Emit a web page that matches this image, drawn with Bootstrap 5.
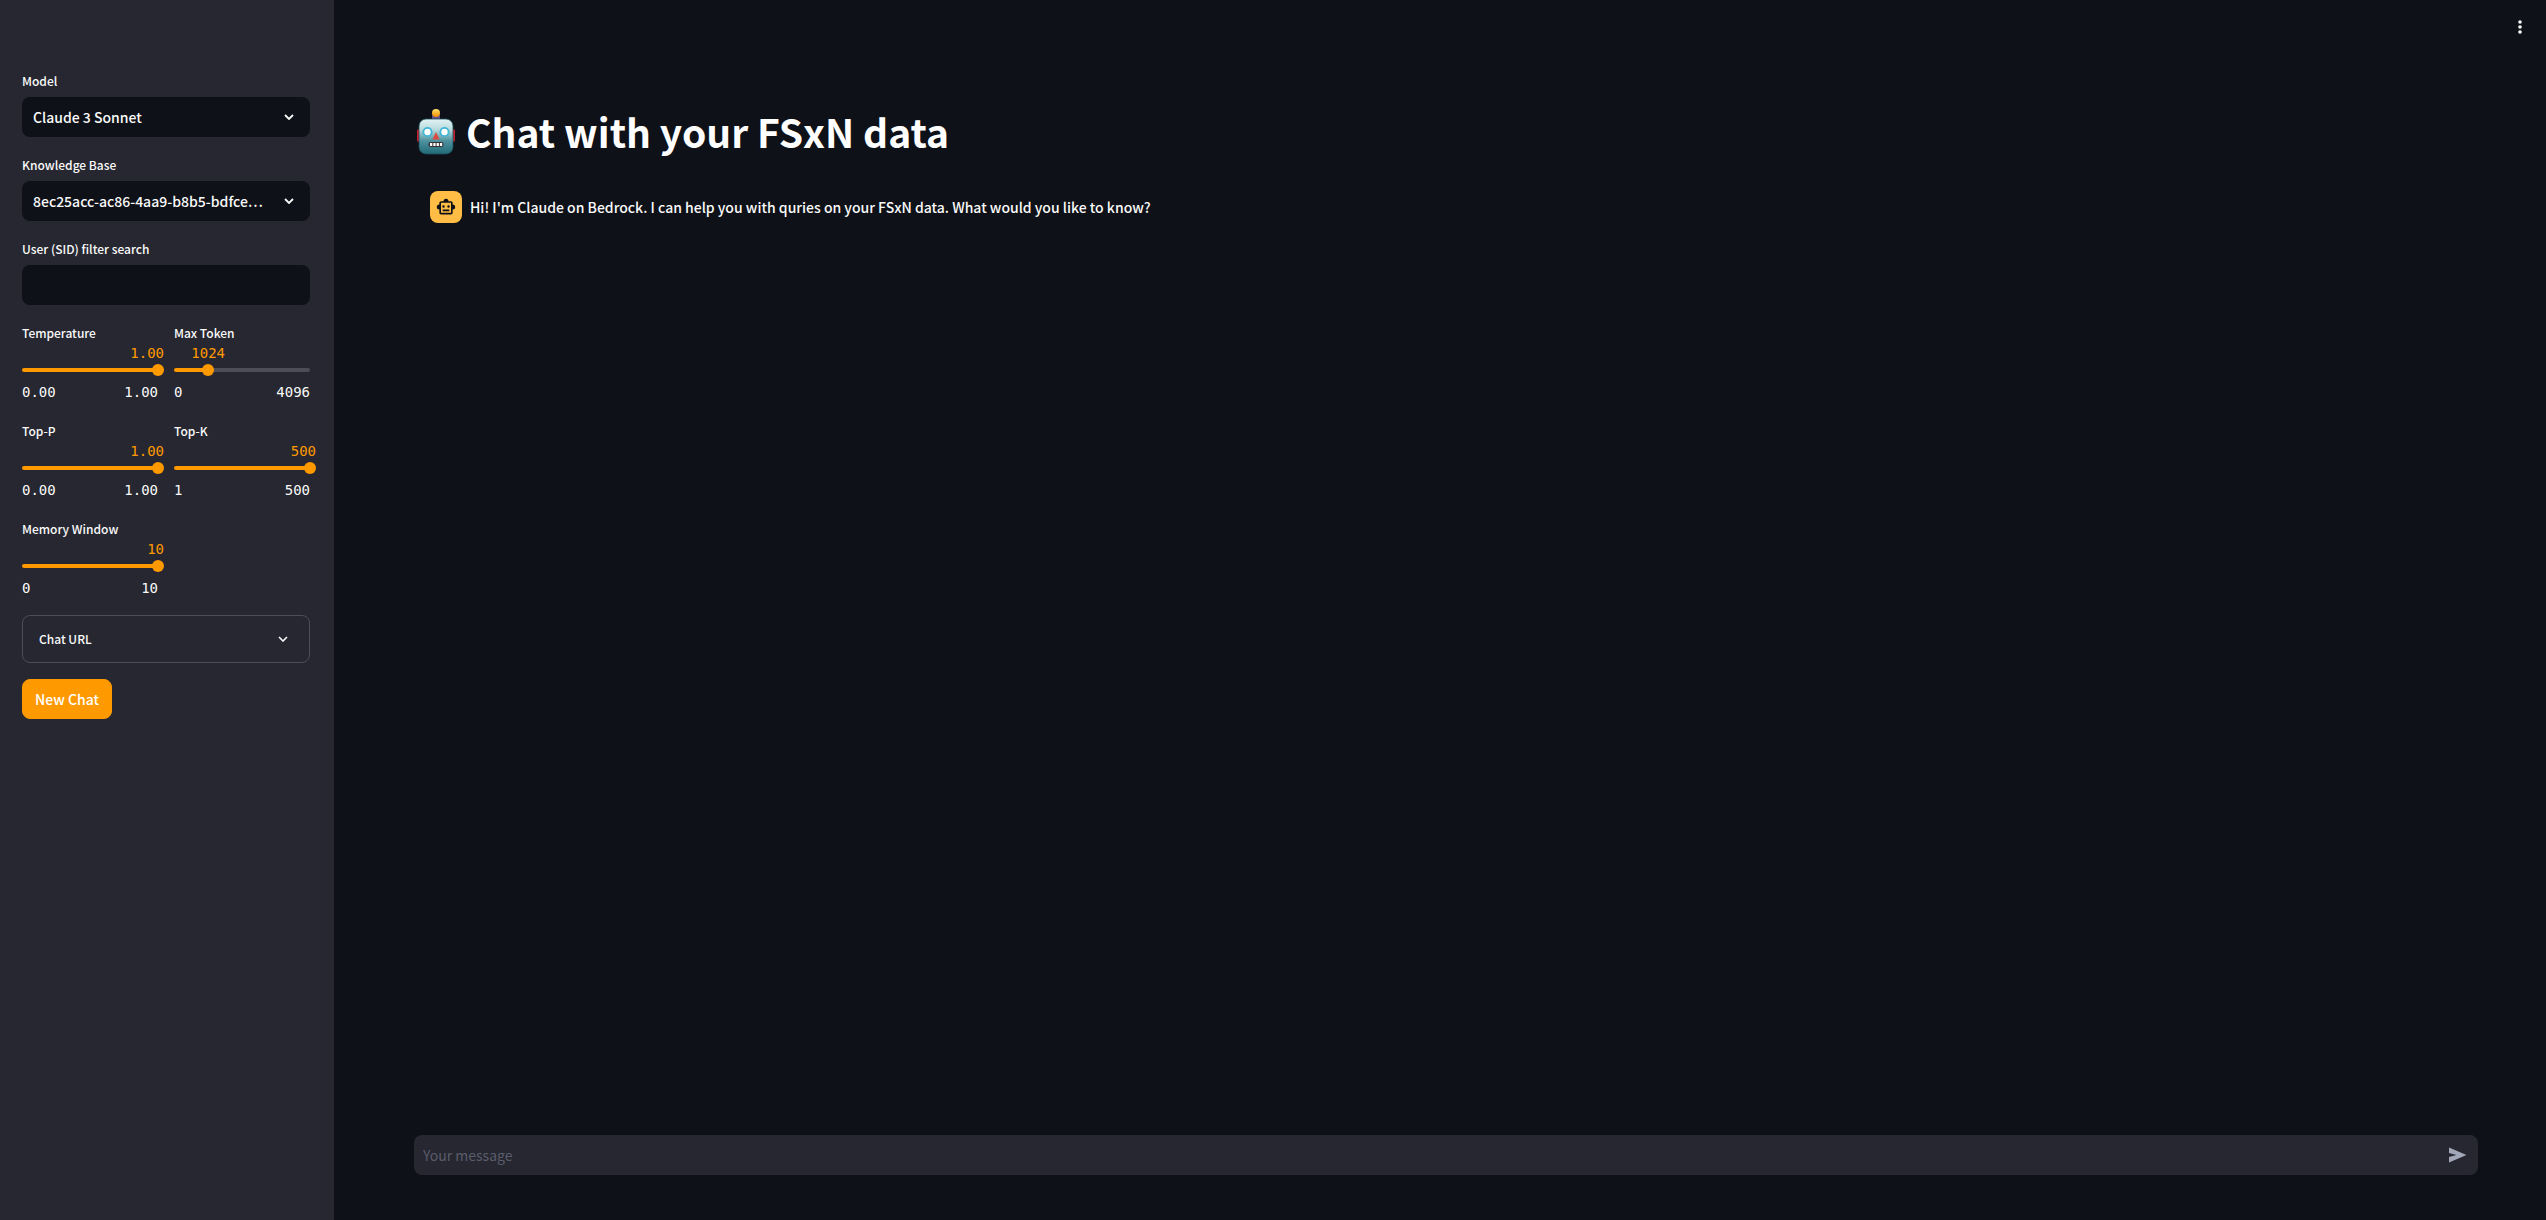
<!DOCTYPE html>
<html lang="en" data-bs-theme="dark">
<head>
<meta charset="utf-8">
<meta name="viewport" content="width=device-width, initial-scale=1">
<title>Chat with your FSxN data</title>
<link href="https://cdn.jsdelivr.net/npm/bootstrap@5.3.0/dist/css/bootstrap.min.css" rel="stylesheet">
<style>
:root { --ink: #fafafa; --page: #0e1117; --panel: #262730; --accent: #ff9900; }
body { background: var(--page); color: var(--ink); font-family: "Noto Sans CJK SC", "Open Sans", sans-serif; font-size: 14px; font-weight: 500; line-height: 24px; }
.side-panel { width: 334px; padding: 69px 24px 24px 22px; background: var(--panel); }
.field-label { display: block; font-size: 12px; line-height: 24px; margin: 0; }
.side-panel .form-select, .side-panel .form-control { height: 40px; margin-top: 4px; padding: 0 44px 0 11px; border: 0; border-radius: 8px; background-color: var(--page); color: var(--ink); font-size: 14px; font-weight: 500; line-height: 24px; }
.side-panel .form-select { background-image: url("data:image/svg+xml,%3Csvg xmlns='http://www.w3.org/2000/svg' viewBox='0 0 10 6'%3E%3Cpath d='M1 1l4 4 4-4' fill='none' stroke='%23fafafa' stroke-width='1.8'/%3E%3C/svg%3E"); background-size: 10px 6px; background-position: right 16px center; }
.slider-grid { display: grid; grid-template-columns: 1fr 1fr; gap: 16px; }
.slider-item { height: 82px; }
.mono { font-family: "DejaVu Sans Mono", monospace; font-size: 14px; font-weight: 400; line-height: 16px; }
.slider-value { display: block; text-align: right; color: var(--accent); }
.rail { display: flex; align-items: center; height: 4px; margin: 7px 0 12px; border-radius: 2px; background: linear-gradient(to right, var(--accent) var(--fill), #4c4d57 var(--fill)); }
.rail input { flex: none; width: calc(100% + 12px); height: 12px; margin: 0 -6px; appearance: none; background: transparent; }
.rail input::-webkit-slider-thumb { appearance: none; width: 12px; height: 12px; border: 0; border-radius: 50%; background: var(--accent); }
.url-box { border: 1px solid #4c4d57; border-radius: 8px; }
.url-box summary { display: flex; align-items: center; justify-content: space-between; height: 46px; padding: 0 21px 0 16px; list-style: none; font-size: 12px; }
.btn-accent { --bs-btn-bg: var(--accent); --bs-btn-color: #fff; --bs-btn-border-color: var(--accent); --bs-btn-hover-bg: #e68a00; --bs-btn-hover-color: #fff; width: 90px; height: 40px; padding: 0; border-radius: 8px; font-size: 14px; font-weight: 500; }
.main-pane { padding: 0 68px 45px 80px; }
.menu-btn { top: 15px; right: 18px; width: 16px; height: 24px; line-height: 0; }
.page-title { margin: 103px 0 0; font-size: 39px; font-weight: 700; line-height: 56px; gap: 8px; }
.chat-row { margin-top: 32px; padding-left: 16px; gap: 8px; }
.avatar { width: 32px; height: 32px; border-radius: 8px; background: #ffbd45; }
.composer { height: 40px; border-radius: 8px; background: var(--panel); padding: 0 11px 0 9px; }
.composer input { padding: 0; font-size: 14px; line-height: 24px; color: var(--ink); box-shadow: none; }
.composer input::placeholder { color: #5b5c6c; font-weight: 400; opacity: 1; }
</style>
<script src="https://cdn.jsdelivr.net/npm/bootstrap@5.3.0/dist/js/bootstrap.bundle.min.js"></script>
</head>
<body>
<div class="d-flex min-vh-100">
  <aside class="side-panel flex-shrink-0 d-flex flex-column gap-3">
    <div>
      <label class="field-label" for="model">Model</label>
      <select class="form-select" id="model"><option>Claude 3 Sonnet</option></select>
    </div>
    <div>
      <label class="field-label" for="kb">Knowledge Base</label>
      <select class="form-select" id="kb"><option>8ec25acc-ac86-4aa9-b8b5-bdfce…</option></select>
    </div>
    <div>
      <label class="field-label" for="sid">User (SID) filter search</label>
      <input class="form-control" id="sid" type="text">
    </div>
    <div class="slider-grid">
      <div class="slider-item">
        <label class="field-label" for="temp">Temperature</label>
        <output class="mono slider-value" for="temp" style="width: calc(100% + 6px)">1.00</output>
        <div class="rail" style="--fill: 100%"><input type="range" id="temp" min="0" max="1" step="0.01" value="1"></div>
        <div class="mono d-flex justify-content-between"><span>0.00</span><span>1.00</span></div>
      </div>
      <div class="slider-item">
        <label class="field-label" for="tokens">Max Token</label>
        <output class="mono slider-value" for="tokens" style="width: calc(25% + 17px)">1024</output>
        <div class="rail" style="--fill: 25%"><input type="range" id="tokens" min="0" max="4096" value="1024"></div>
        <div class="mono d-flex justify-content-between"><span>0</span><span>4096</span></div>
      </div>
      <div class="slider-item">
        <label class="field-label" for="topp">Top-P</label>
        <output class="mono slider-value" for="topp" style="width: calc(100% + 6px)">1.00</output>
        <div class="rail" style="--fill: 100%"><input type="range" id="topp" min="0" max="1" step="0.01" value="1"></div>
        <div class="mono d-flex justify-content-between"><span>0.00</span><span>1.00</span></div>
      </div>
      <div class="slider-item">
        <label class="field-label" for="topk">Top-K</label>
        <output class="mono slider-value" for="topk" style="width: calc(100% + 6px)">500</output>
        <div class="rail" style="--fill: 100%"><input type="range" id="topk" min="1" max="500" value="500"></div>
        <div class="mono d-flex justify-content-between"><span>1</span><span>500</span></div>
      </div>
      <div class="slider-item">
        <label class="field-label" for="memory">Memory Window</label>
        <output class="mono slider-value" for="memory" style="width: calc(100% + 6px)">10</output>
        <div class="rail" style="--fill: 100%"><input type="range" id="memory" min="0" max="10" value="10"></div>
        <div class="mono d-flex justify-content-between"><span>0</span><span>10</span></div>
      </div>
    </div>
    <details class="url-box">
      <summary>Chat URL
        <svg width="10" height="6" viewBox="0 0 10 6" aria-hidden="true"><path d="M1 1l4 4 4-4" fill="none" stroke="#fafafa" stroke-width="1.6"/></svg>
      </summary>
    </details>
    <button class="btn btn-accent" type="button">New Chat</button>
  </aside>

  <main class="main-pane flex-grow-1 d-flex flex-column position-relative">
    <button class="btn menu-btn position-absolute border-0 p-0" type="button" aria-label="Menu">
      <svg width="16" height="24" viewBox="0 0 16 24" fill="#fafafa"><circle cx="8" cy="7" r="1.800"/><circle cx="8" cy="12" r="1.800"/><circle cx="8" cy="17" r="1.800"/></svg>
    </button>
    <h1 class="page-title d-flex align-items-center">
      <svg width="44" height="48" viewBox="0 0 44 48" aria-hidden="true">
        <defs>
          <linearGradient id="face" x1="0" y1="0" x2="0" y2="1"><stop offset="0" stop-color="#e2f3f4"/><stop offset=".3" stop-color="#b9dadd"/><stop offset=".62" stop-color="#4f929d"/><stop offset="1" stop-color="#216a78"/></linearGradient>
          <linearGradient id="bulb" x1="0" y1="0" x2="0" y2="1"><stop offset="0" stop-color="#ffe36b"/><stop offset="1" stop-color="#f08a00"/></linearGradient>
        </defs>
        <rect x="3" y="22" width="5" height="13" rx="2" fill="#c4202d"/><rect x="36" y="22" width="5" height="13" rx="2" fill="#c4202d"/>
        <path d="M18 8h8v4h-8z" fill="#62508c"/>
        <circle cx="22" cy="6" r="4" fill="url(#bulb)"/>
        <rect x="5" y="12" width="34" height="35" rx="7" fill="url(#face)" stroke="#1c4d58" stroke-width=".8"/>
        <circle cx="13.500" cy="25" r="5" fill="#3fb6d4"/><circle cx="30.500" cy="25" r="5" fill="#3fb6d4"/>
        <circle cx="13.500" cy="25" r="3.200" fill="#fff"/><circle cx="30.500" cy="25" r="3.200" fill="#fff"/>
        <path d="M22 25l3.500 7.500h-7z" fill="#e0493f"/>
        <rect x="14.500" y="35" width="15" height="5" rx="2" fill="#3a2f33"/>
        <path d="M16 36h2.300v3H16zM19.300 36h2.300v3h-2.300zM22.600 36h2.300v3h-2.300zM25.900 36h2.300v3h-2.300z" fill="#fff"/>
      </svg>
      <span>Chat with your FSxN data</span>
    </h1>
    <div class="chat-row d-flex align-items-center">
      <div class="avatar d-flex align-items-center justify-content-center">
        <svg width="20" height="20" viewBox="0 0 24 24" fill="#0e1117" aria-hidden="true"><path d="M20 9V7c0-1.100-.9-2-2-2h-3a3 3 0 0 0-6 0H6c-1.100 0-2 .9-2 2v2a3 3 0 0 0 0 6v4c0 1.100.9 2 2 2h12c1.100 0 2-.9 2-2v-4a3 3 0 0 0 0-6zm-2 10H6V7h12v12zM9 13a1.500 1.500 0 1 1 0-3 1.500 1.500 0 0 1 0 3zm7.500-1.500a1.500 1.500 0 1 1-3 0 1.500 1.500 0 0 1 3 0zM8 15h8v2H8v-2z"/></svg>
      </div>
      <div>Hi! I'm Claude on Bedrock. I can help you with quries on your FSxN data. What would you like to know?</div>
    </div>
    <form class="composer d-flex align-items-center mt-auto">
      <input class="form-control border-0 bg-transparent flex-grow-1" type="text" placeholder="Your message" aria-label="Your message">
      <button class="btn border-0 p-0 d-flex" type="button" aria-label="Send">
        <svg width="20" height="20" viewBox="0 0 20 20" fill="#a3a8b8"><path d="M2 2.500L19.500 10 2 17.500V12l7.500-2L2 8z"/></svg>
      </button>
    </form>
  </main>
</div>
</body>
</html>
